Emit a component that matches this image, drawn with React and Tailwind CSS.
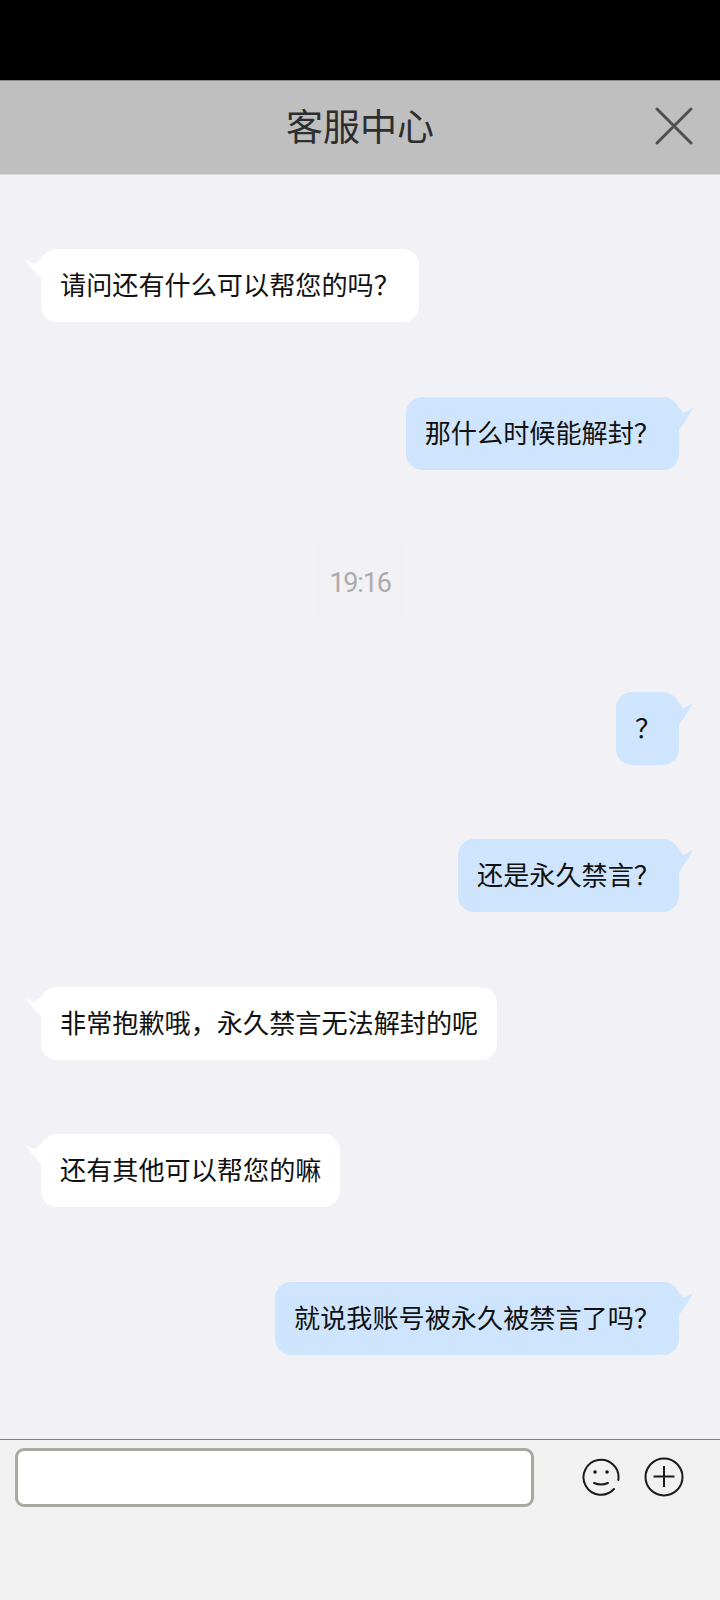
const FONT = "font-['Noto_Sans_CJK_SC','Noto_Sans',sans-serif]";

function TailLeft() {
  return (
    <svg className="absolute left-[-17px] top-0" width="24" height="32" viewBox="0 0 24 32">
      <path d="M1 11 Q7 14 11 15 Q16 12 21 4 L21 29 L17 29 Q8 21 1 11 Z" fill="#ffffff" />
    </svg>
  );
}

function TailRight() {
  return (
    <svg className="absolute right-[-15px] top-0" width="20" height="36" viewBox="0 0 20 36">
      <path d="M19 11 Q14 14 9 16 Q6 12 1 5 L1 33 L5 33 Q13 22 19 11 Z" fill="#cfe5fd" />
    </svg>
  );
}

function Bubble({ side, children, narrow }) {
  const mine = side === "right";
  return (
    <div className={mine ? "flex justify-end pr-[41px]" : "flex justify-start pl-[41px]"}>
      <div
        className={
          "relative h-[73px] rounded-[16px] pl-[19px] pr-[19px] pt-[19px] text-[26.15px] leading-[33px] text-[#111111] whitespace-nowrap " +
          (mine ? "bg-[#cfe5fd] " : "bg-white ") +
          (narrow ? "w-[63px]" : "")
        }
      >
        {mine ? <TailRight /> : <TailLeft />}
        {children}
      </div>
    </div>
  );
}

function Smile() {
  return (
    <svg width="38" height="38" viewBox="0 0 38 38" fill="none" stroke="#1a1a1a" strokeWidth="2" strokeLinecap="round">
      <path d="M32 31 A17.5 17.5 0 1 1 36.3 22" />
      <circle cx="13" cy="14" r="1.8" fill="#1a1a1a" stroke="none" />
      <circle cx="25" cy="14" r="1.8" fill="#1a1a1a" stroke="none" />
      <path d="M12 25 Q19 28 26 25" />
    </svg>
  );
}

function Plus() {
  return (
    <svg width="40" height="40" viewBox="0 0 40 40" fill="none" stroke="#1a1a1a" strokeWidth="2">
      <circle cx="20" cy="20" r="18.5" />
      <path d="M20 9 V30 M9.5 19.5 H30.5" />
    </svg>
  );
}

export default function App() {
  return (
    <div className={"flex h-[1600px] w-[720px] flex-col overflow-hidden bg-[#f1f1f6] " + FONT}>
      <div className="h-[80px] shrink-0 bg-black" />
      <header className="relative flex h-[95px] shrink-0 items-center justify-center border-t border-t-[#8a8a8a] border-b border-b-[#d8d8d8] bg-[#bfbfbf] pb-[5px]">
        <h1 className="text-[37px] font-normal leading-[44px] text-[#2e2e2e]">客服中心</h1>
        <svg className="absolute right-[27px] top-[26px]" width="38" height="38" viewBox="0 0 38 38" fill="none" stroke="#505050" strokeWidth="3" strokeLinecap="round">
          <path d="M2 2 L36 36 M36 2 L2 36" />
        </svg>
      </header>
      <main className="flex flex-1 flex-col gap-[74.5px] pt-[74px]">
        <Bubble side="left">请问还有什么可以帮您的吗？</Bubble>
        <Bubble side="right">那什么时候能解封？</Bubble>
        <div className="flex justify-center">
          <div className="flex h-[73px] w-[88px] items-center justify-center bg-[#f1f1f3] pt-[5px] font-['Roboto',sans-serif] text-[27px] font-normal tracking-[-1.2px] text-[#ababab]">
            19:16
          </div>
        </div>
        <Bubble side="right" narrow>？</Bubble>
        <Bubble side="right">还是永久禁言？</Bubble>
        <Bubble side="left">非常抱歉哦，永久禁言无法解封的呢</Bubble>
        <Bubble side="left">还有其他可以帮您的嘛</Bubble>
        <Bubble side="right">就说我账号被永久被禁言了吗？</Bubble>
      </main>
      <footer className="flex h-[161px] shrink-0 items-start border-t border-t-[#7f7f84] bg-[#f1f1f2] pl-[15px] pt-[8px]">
        <div className="h-[59px] w-[519px] rounded-[9px] border-[3px] border-[#a9a9a1] bg-white" />
        <div className="ml-[48px] mt-[9px] flex items-center gap-[24px]">
          <Smile />
          <Plus />
        </div>
      </footer>
    </div>
  );
}
